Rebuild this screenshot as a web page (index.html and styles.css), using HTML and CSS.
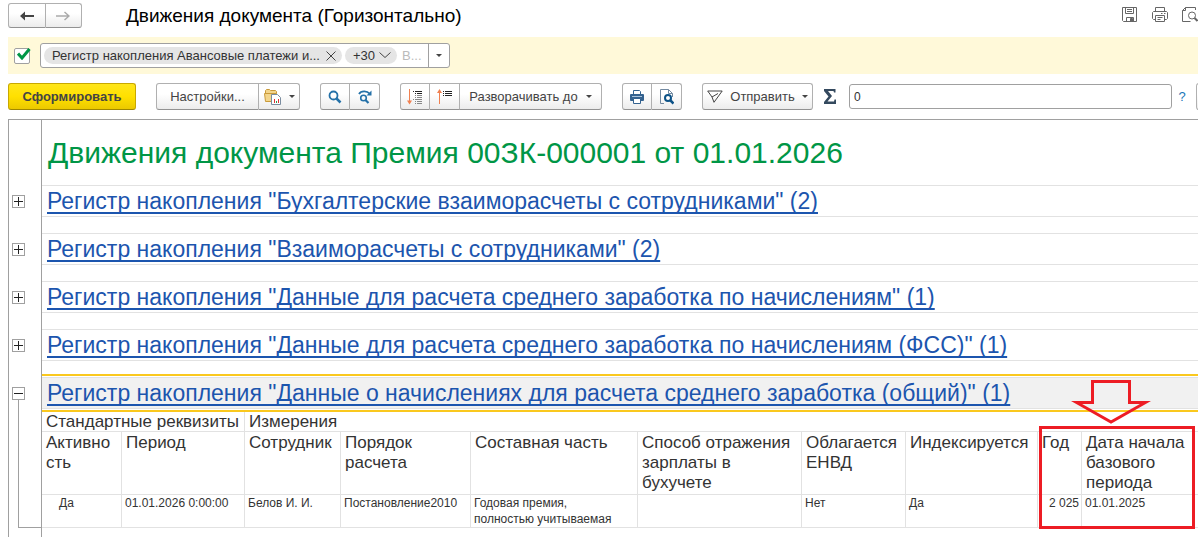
FILE: index.html
```html
<!DOCTYPE html>
<html lang="ru">
<head>
<meta charset="utf-8">
<title>Движения документа (Горизонтально)</title>
<link rel="stylesheet" href="styles.css">
</head>
<body>
<header class="titlebar">
  <div class="group nav">
    <button class="btn" type="button" aria-label="Назад"><svg width="14" height="10" viewBox="0 0 14 10"><path d="M0 5 5 .5V4h9v2H5v3.500z" fill="#444"/></svg></button>
    <button class="btn" type="button" aria-label="Вперед"><svg width="14" height="10" viewBox="0 0 14 10"><path d="M8.500 1 13 5 8.500 9M0 5h13" fill="none" stroke="#aaa" stroke-width="1.500"/></svg></button>
  </div>
  <h1 class="title">Движения документа (Горизонтально)</h1>
  <div class="window-tools">
    <button class="icon-btn" type="button" aria-label="Сохранить"><svg width="16" height="16" viewBox="0 0 16 16" fill="none" stroke="#666"><path d="M.5.500h14v14h-13l-1-1zM3.500.500v6h8v-6M5 2.500h5M5 4.500h5M4.500 14.500v-4h7v4"/><path d="M8.500 11.500h2v3h-2z" fill="#666"/></svg></button>
    <button class="icon-btn" type="button" aria-label="Печать"><svg width="16" height="16" viewBox="0 0 16 16" fill="none" stroke="#666"><path d="M3.500 4.500v-4h9v4M3.500 12.500h-2l-1-1v-6l1-1h13l1 1v6l-1 1h-2M3.500 8.500h9v6h-9zM5.500 10.500h5M5.500 12.500h3M9 6.500h1.500M12 6.500h1.500"/></svg></button>
    <button class="icon-btn" type="button" aria-label="Предварительный просмотр"><svg width="16" height="16" viewBox="0 0 16 16" fill="none" stroke="#666"><path d="M13.500 3V.5h-10l-3 3v11h8M.5 3.500h3v-3"/><circle cx="10" cy="8.500" r="3.500"/><path d="m12.500 11 3 3" stroke-width="2"/></svg></button>
  </div>
</header>

<section class="filter">
  <label class="check-wrap"><input class="check" type="checkbox" checked aria-label="Использовать отбор"><svg class="tick" width="14" height="12" viewBox="0 0 14 12"><path d="m1 5.500 4 4.500 7.500-9" fill="none" stroke="#009646" stroke-width="3"/></svg></label>
  <div class="filter-box">
    <span class="chip chip-long">Регистр накопления Авансовые платежи и...<button class="chip-btn" type="button" aria-label="Удалить"><svg width="10" height="10" viewBox="0 0 10 10"><path d="m.5.5 9 9m0-9-9 9" stroke="#444" fill="none"/></svg></button></span>
    <span class="chip chip-more">+30<button class="chip-btn" type="button" aria-label="Показать все"><svg width="12" height="7" viewBox="0 0 12 7"><path d="m.5.5 5.500 5 5.500-5" stroke="#444" fill="none"/></svg></button></span>
    <input class="filter-input" type="text" placeholder="В..." aria-label="Регистр">
    <button class="filter-drop" type="button" aria-label="Выбрать"><i class="caret"></i></button>
  </div>
</section>

<div class="toolbar">
  <button class="btn primary" type="button">Сформировать</button>
  <div class="group">
    <button class="btn settings" type="button">Настройки...</button>
    <button class="btn variants" type="button" aria-label="Варианты"><svg width="18" height="16" viewBox="0 0 18 16"><path d="M1.500 4.500v-3l1-1h3l1 1h5l1 1v2M.5 4.500h12v8H1.500z" fill="#f3d58b" stroke="#c99a3a"/><path d="M7.500 5.500h6l3 3v7h-9z" fill="#fff" stroke="#7a8da0"/><path d="M10.500 10v4" stroke="#d33"/><path d="M12.500 12v2" stroke="#2a9a4a"/><path d="M14.500 10v4" stroke="#d33"/></svg><i class="caret"></i></button>
  </div>
  <div class="group">
    <button class="btn sq" type="button" aria-label="Найти"><svg width="14" height="14" viewBox="0 0 14 14" fill="none" stroke="#2471a8"><circle cx="5.500" cy="5.500" r="4" stroke-width="1.800"/><path d="m8.500 8.500 4 4" stroke-width="2.500"/></svg></button>
    <button class="btn sq" type="button" aria-label="Найти далее"><svg width="14" height="14" viewBox="0 0 14 14" fill="none" stroke="#2471a8"><path d="M1 4c2-3.500 8-3.500 10.500-.5" stroke-width="1.800"/><path d="M13.500.5v5h-5z" fill="#2471a8" stroke="none"/><circle cx="5.500" cy="8" r="2.800" stroke-width="1.600"/><path d="m7.500 10 3 3" stroke-width="2.200"/></svg></button>
  </div>
  <div class="group">
    <button class="btn sq" type="button" aria-label="Развернуть"><svg width="16" height="16" viewBox="0 0 16 16" fill="none"><path d="M2.500 0v14" stroke="#f08050"/><path d="M0 11.500h5l-2.500 4z" fill="#f08050"/><path d="M6 2.500h1M8 2.500h7M8 4.500h1M10 4.500h5" stroke="#222"/><path d="M8 6.500h1M10 6.500h5M8 8.500h1M10 8.500h5M6 10.500h1M8 10.500h7M8 12.500h1M10 12.500h5M8 14.500h1M10 14.500h5" stroke="#888"/></svg></button>
    <button class="btn sq" type="button" aria-label="Свернуть"><svg width="16" height="16" viewBox="0 0 16 16" fill="none"><path d="M2.500 2v13" stroke="#f08050"/><path d="M0 4h5L2.500 0z" fill="#f08050"/><path d="M6 2.500h1M8 2.500h7M6 4.500h1M8 4.500h7M6 6.500h1M8 6.500h7" stroke="#222"/></svg></button>
    <button class="btn expand" type="button">Разворачивать до<i class="caret"></i></button>
  </div>
  <div class="group">
    <button class="btn sq" type="button" aria-label="Печать"><svg width="14" height="14" viewBox="0 0 14 14"><path d="M3.500 5V.5h6l1 1V5" fill="#fff" stroke="#34628f"/><rect y="4" width="14" height="7" rx="1" fill="#34628f"/><path d="M2 6.500h10" stroke="#a9c3dc"/><path d="M3.500 8.500h7v5h-7z" fill="#fff" stroke="#34628f"/></svg></button>
    <button class="btn sq" type="button" aria-label="Просмотр"><svg width="14" height="16" viewBox="0 0 14 16" fill="none"><path d="M4 14.500H.5V.5h8l4 4V8M8.500.5v4h4" stroke="#7289a0"/><circle cx="8" cy="9" r="3" fill="#fff" stroke="#0c5287" stroke-width="2"/><path d="m10 11 3.500 3.500" stroke="#0c5287" stroke-width="2.500"/></svg></button>
  </div>
  <button class="btn send" type="button"><svg width="16" height="13" viewBox="0 0 16 13" fill="none" stroke="#444"><path d="M.7 1h14.500L7 12.300 5 7zM5 7l6-3.500"/></svg>Отправить<i class="caret"></i></button>
  <label class="sum-label" for="sum"><svg width="12" height="15" viewBox="0 0 12 15"><path d="M0 0h11.500v3.500h-1.500L9.500 2H4l4 5-4.500 5.500H10l.5-2H12V15H0v-2l4.500-5.500L0 2z" fill="#34495e"/></svg></label>
  <input class="sum" id="sum" type="text" value="0" aria-label="Сумма">
  <a class="help" href="#help">?</a>
  <button class="btn more" type="button" aria-label="Еще"></button>
</div>

<main class="sheet">
  <div class="line"><div class="gutter"></div><h2 class="doc-title">Движения документа Премия 00ЗК-000001 от 01.01.2026</h2></div>
  <div class="line"><div class="gutter"><button class="toggle plus" type="button" aria-label="Развернуть"></button></div><div class="register"><a href="#r1">Регистр накопления "Бухгалтерские взаиморасчеты с сотрудниками" (2)</a></div></div>
  <div class="line"><div class="gutter"><button class="toggle plus" type="button" aria-label="Развернуть"></button></div><div class="register"><a href="#r2">Регистр накопления "Взаиморасчеты с сотрудниками" (2)</a></div></div>
  <div class="line"><div class="gutter"><button class="toggle plus" type="button" aria-label="Развернуть"></button></div><div class="register"><a href="#r3">Регистр накопления "Данные для расчета среднего заработка по начислениям" (1)</a></div></div>
  <div class="line"><div class="gutter"><button class="toggle plus" type="button" aria-label="Развернуть"></button></div><div class="register last"><a href="#r4">Регистр накопления "Данные для расчета среднего заработка по начислениям (ФСС)" (1)</a></div></div>
  <div class="line">
    <div class="gutter open"><button class="toggle" type="button" aria-label="Свернуть"></button><div class="branch"></div></div>
    <div class="details">
      <div class="selected"><div class="register"><a href="#r5">Регистр накопления "Данные о начислениях для расчета среднего заработка (общий)" (1)</a></div></div>
      <table class="data">
        <colgroup><col class="w80"><col class="w123"><col class="w96"><col class="w130"><col class="w167"><col class="w164"><col class="w104"><col class="w132"><col class="w44"><col class="w112"><col></colgroup>
        <thead>
          <tr class="groups"><th colspan="2">Стандартные реквизиты</th><th colspan="9">Измерения</th></tr>
          <tr class="names"><th>Активно<wbr>сть</th><th>Период</th><th>Сотрудник</th><th>Порядок расчета</th><th>Составная часть</th><th>Способ отражения зарплаты в бухучете</th><th>Облагается ЕНВД</th><th>Индексируется</th><th>Год</th><th>Дата начала базового периода</th><th></th></tr>
        </thead>
        <tbody>
          <tr><td class="center">Да</td><td>01.01.2026 0:00:00</td><td>Белов И. И.</td><td>Постановление2010</td><td>Годовая премия,<br>полностью учитываемая</td><td></td><td>Нет</td><td>Да</td><td class="num">2 025</td><td>01.01.2025</td><td></td></tr>
        </tbody>
      </table>
      <div class="mark-box"></div>
      <svg class="mark-arrow" width="80" height="46" viewBox="0 0 80 46"><path d="M21.500 3.500h37v21h16L40 44 5.500 24.500h16z" fill="none" stroke="#ed1c24" stroke-width="3" stroke-miterlimit="8"/></svg>
    </div>
  </div>
  <div class="line rest"><div class="gutter"></div></div>
</main>
</body>
</html>
```
FILE: styles.css
```css
* { box-sizing: border-box; }

body {
  margin: 0;
  height: 100vh;
  overflow: hidden;
  display: flex;
  flex-direction: column;
  background: #fff;
  color: #333;
  font: 13px/16px "Liberation Sans", Arial, sans-serif;
}

button, input { font: inherit; color: inherit; margin: 0; }
button { padding: 0; cursor: pointer; }
svg { display: block; flex: none; }

/* Title bar */
.titlebar {
  flex: none;
  display: flex;
  align-items: flex-start;
  height: 37px;
  padding: 3px 0 0 8px;
}
.nav { width: 74px; height: 25px; }
.nav .btn { flex: 1; height: 25px; }
.title {
  flex: 1;
  margin: 0 0 0 44px;
  color: #000;
  font-size: 19px;
  font-weight: 400;
  line-height: 26px;
  white-space: nowrap;
}
.window-tools { display: flex; gap: 14px; padding-top: 4px; }
.icon-btn { border: 0; background: none; }

/* Filter */
.filter {
  flex: none;
  display: flex;
  align-items: center;
  gap: 10px;
  height: 37px;
  margin-left: 8px;
  padding-left: 6px;
  background: #fff9d9;
}
.check-wrap { position: relative; display: flex; }
.check {
  appearance: none;
  width: 16px;
  height: 16px;
  border: 1px solid #a0a0a0;
  border-radius: 2px;
  background: #fff;
}
.tick { position: absolute; left: 3px; top: 0; visibility: hidden; }
.check:checked + .tick { visibility: visible; }
.filter-box {
  display: flex;
  align-items: center;
  gap: 3px;
  width: 410px;
  height: 25px;
  padding-left: 3px;
  border: 1px solid #a0a0a0;
  border-radius: 3px;
  background: #fff;
}
.chip {
  display: flex;
  flex: none;
  align-items: center;
  justify-content: space-between;
  height: 17px;
  padding: 0 6px 0 8px;
  border-radius: 9px;
  background: #e5e5e5;
  white-space: nowrap;
}
.chip-long { width: 298px; }
.chip-more { width: 52px; }
.chip-btn { border: 0; background: none; }
.filter-input {
  flex: 1;
  min-width: 0;
  padding: 0 0 0 2px;
  border: 0;
  outline: 0;
  background: none;
}
.filter-input::placeholder { color: #bbb; }
.filter-drop {
  display: flex;
  justify-content: center;
  align-items: center;
  width: 21px;
  height: 23px;
  border: 0;
  border-left: 1px solid #a0a0a0;
  background: none;
}
.caret {
  flex: none;
  border: 3px solid transparent;
  border-top-color: #444;
  border-bottom: 0;
}

/* Command bar */
.toolbar {
  flex: none;
  display: flex;
  align-items: center;
  height: 45px;
  padding-left: 8px;
}
.toolbar > .group, .toolbar > .send { margin-left: 20px; }
.group { display: flex; flex: none; }
.btn {
  display: flex;
  flex: none;
  align-items: center;
  justify-content: center;
  height: 27px;
  border: 1px solid #b0b0b0;
  border-bottom-color: #929292;
  border-radius: 3px;
  background: linear-gradient(#fff, #fff 40%, #ececec);
  color: #444;
  white-space: nowrap;
}
.group .btn + .btn { border-left: 0; border-top-left-radius: 0; border-bottom-left-radius: 0; }
.group .btn:not(:last-child) { border-top-right-radius: 0; border-bottom-right-radius: 0; }
.primary {
  width: 128px;
  border-color: #c8a800;
  border-bottom-color: #a08800;
  background: linear-gradient(#ffe61a, #ffe000 50%, #ecc900);
  font-weight: 700;
}
.settings { width: 103px; }
.variants { width: 41px; gap: 7px; }
.sq { width: 30px; }
.expand { width: 142px; gap: 8px; }
.send { width: 111px; gap: 7px; }
.sum-label { margin: 0 13px 0 11px; }
.sum {
  flex: 1;
  min-width: 0;
  height: 25px;
  padding: 0 4px;
  border: 1px solid #a0a0a0;
  border-radius: 3px;
  font-size: 12px;
}
.help { width: 24px; color: #1a78b8; text-align: center; padding-right: 4px; text-decoration: none; }
.more { width: 30px; margin-right: -28px; }

/* Spreadsheet */
.sheet {
  flex: 1;
  display: flex;
  flex-direction: column;
  margin-left: 8px;
  border: solid #a0a0a0;
  border-width: 1px 0 0 1px;
}
.line { display: flex; flex: none; }
.rest { flex: 1; }
.gutter {
  flex: none;
  width: 33px;
  padding: 10px 0 0 3px;
  border-right: 1px solid #a0a0a0;
}
.doc-title {
  flex: 1;
  margin: 0;
  padding-left: 6px;
  color: #009646;
  font-size: 30px;
  font-weight: 400;
  line-height: 65px;
  white-space: nowrap;
}
.register {
  flex: 1;
  height: 32px;
  margin-bottom: 16px;
  padding-left: 5px;
  border: solid #e2e2e2;
  border-width: 1px 0;
  font-size: 23px;
  line-height: 30px;
  white-space: nowrap;
}
.register.last { margin-bottom: 13px; }
.register a {
  color: #1c55ae;
  text-decoration-thickness: 2px;
  text-underline-offset: 3px;
  text-decoration-skip-ink: none;
}
.toggle {
  display: block;
  width: 13px;
  height: 13px;
  border: 1px solid #a0a0a0;
  background: linear-gradient(#222, #222) center / 9px 1px no-repeat #fff;
}
.toggle.plus {
  background:
    linear-gradient(#222, #222) center / 9px 1px no-repeat,
    linear-gradient(#222, #222) center / 1px 9px no-repeat #fff;
}
.gutter.open {
  display: flex;
  flex-direction: column;
  padding-top: 13px;
}
.branch {
  flex: 1;
  margin-left: 6px;
  border: solid #a0a0a0;
  border-width: 0 0 1px 1px;
}
.details { position: relative; flex: 1; min-width: 0; }
.selected {
  padding: 1px 0;
  border: solid #fac81e;
  border-width: 2px 0;
}
.selected .register { margin: 0; background: #f1f1f1; }

.data {
  width: 100%;
  table-layout: fixed;
  border-collapse: separate;
  border-spacing: 0;
}
.w80 { width: 80px; }
.w123 { width: 123px; }
.w96 { width: 96px; }
.w130 { width: 130px; }
.w167 { width: 167px; }
.w164 { width: 164px; }
.w104 { width: 104px; }
.w132 { width: 132px; }
.w44 { width: 44px; }
.w112 { width: 112px; }
.data th, .data td {
  border: solid #e2e2e2;
  border-width: 0 1px 1px 0;
  text-align: left;
  vertical-align: top;
}
.data th { padding: 0 0 0 4px; font-size: 17px; font-weight: 400; line-height: 20px; white-space: nowrap; }
.data .groups th { line-height: 19px; }
.data .names th { height: 63px; padding-top: 1px; white-space: normal; }
.data td { height: 33px; padding: 0 2px 0 3px; font-size: 12px; }
.data th:last-child, .data td:last-child { border-right: 0; }
.data .center { padding-left: 17px; }
.data .num { text-align: right; }

/* Callout over the last two columns */
.mark-box {
  position: absolute;
  left: 997px;
  top: 52px;
  width: 156px;
  height: 103px;
  border: 3px solid #ed1c24;
}
.mark-arrow { position: absolute; left: 1029px; top: 4px; }
```
